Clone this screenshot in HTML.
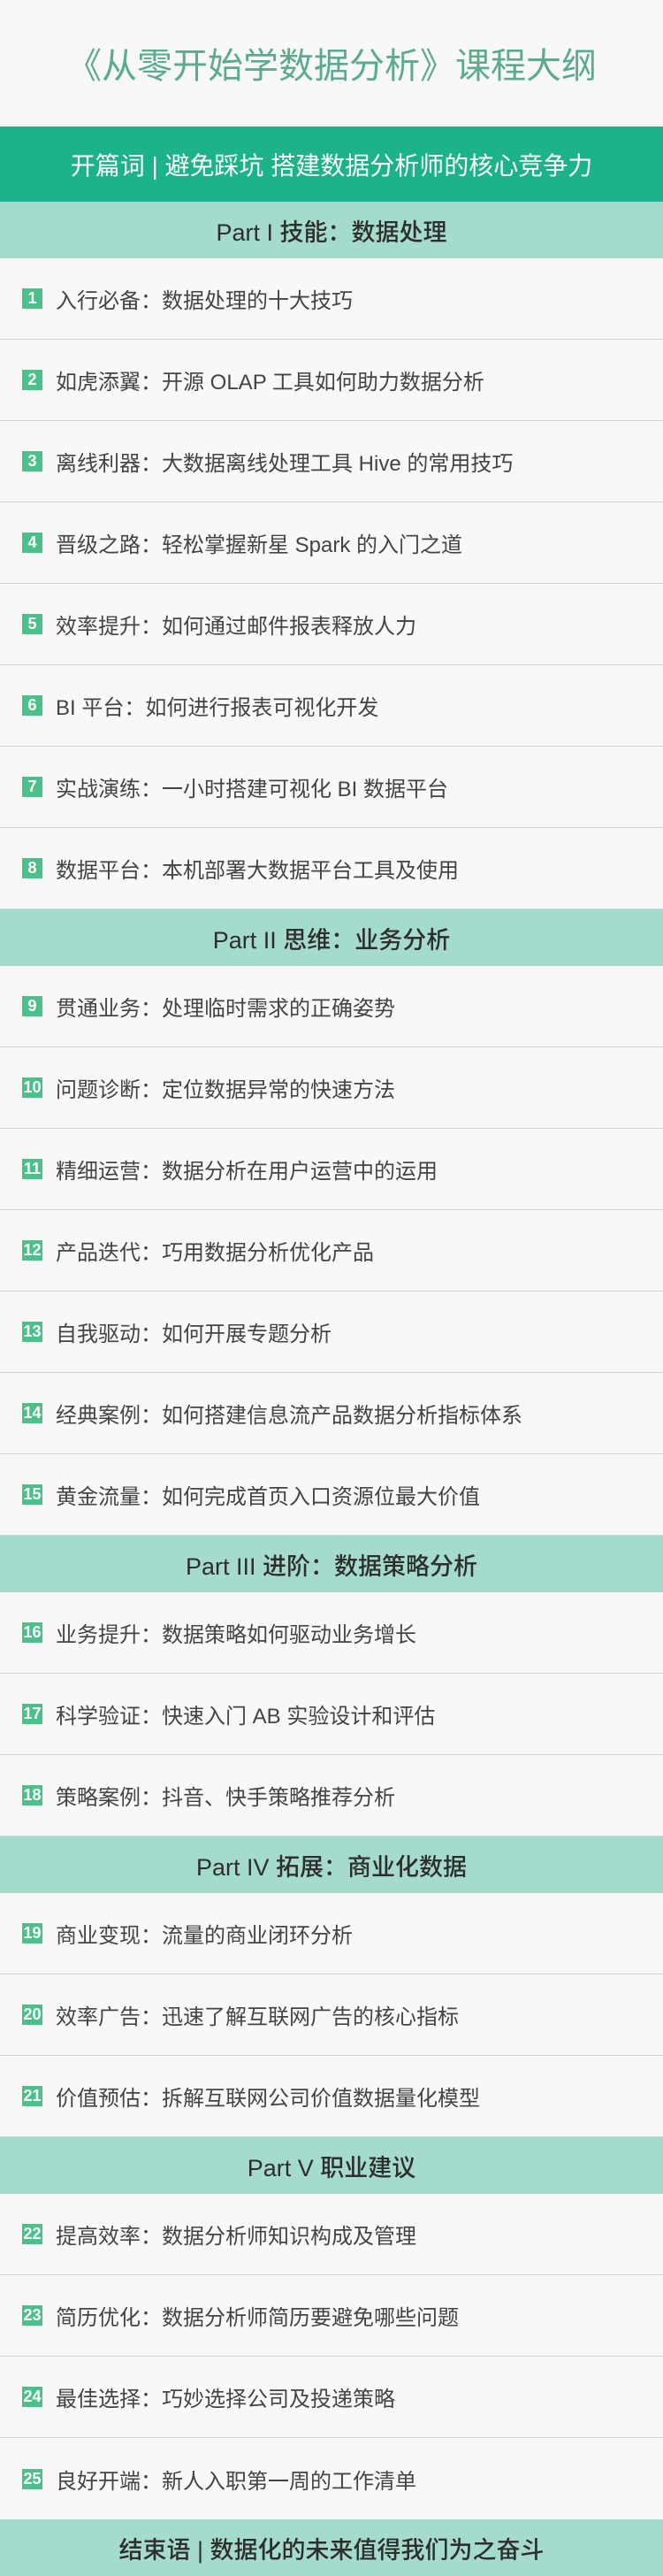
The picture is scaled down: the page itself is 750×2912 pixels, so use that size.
<!DOCTYPE html>
<html><head><meta charset="utf-8"><style>
*{margin:0;padding:0;box-sizing:border-box}
body{width:750px;height:2912px;background:#f8f8f8;font-family:"Liberation Sans","Noto Sans CJK SC",sans-serif;overflow:hidden}
.title{height:143px;display:flex;align-items:center;justify-content:center;color:#5cab8c;font-size:40px;padding-bottom:2px}
.open{height:85px;background:#1db38a;color:#fff;font-size:28px;display:flex;align-items:center;justify-content:center}
.part{height:64px;background:#a5dbcc;color:#2e2e2e;font-size:27px;font-weight:500;display:flex;align-items:center;justify-content:center}
.item{height:92px;border-bottom:1px solid #d2d2da;display:flex;align-items:center;padding-left:25px;font-size:24px;color:#444}
.b{width:23px;height:23px;background:#4cc08a;color:#fff;font-family:"Liberation Sans Narrow","Liberation Sans",sans-serif;font-size:18px;font-weight:bold;display:flex;align-items:center;justify-content:center;margin-right:15px;flex:none}
.item.last{border-bottom:none}
</style></head><body>
<div class="title">《从零开始学数据分析》课程大纲</div>
<div class="open">开篇词 | 避免踩坑 搭建数据分析师的核心竞争力</div>
<div class="part">Part I 技能：数据处理</div>
<div class="item"><span class="b">1</span>入行必备：数据处理的十大技巧</div>
<div class="item"><span class="b">2</span>如虎添翼：开源 OLAP 工具如何助力数据分析</div>
<div class="item"><span class="b">3</span>离线利器：大数据离线处理工具 Hive 的常用技巧</div>
<div class="item"><span class="b">4</span>晋级之路：轻松掌握新星 Spark 的入门之道</div>
<div class="item"><span class="b">5</span>效率提升：如何通过邮件报表释放人力</div>
<div class="item"><span class="b">6</span>BI 平台：如何进行报表可视化开发</div>
<div class="item"><span class="b">7</span>实战演练：一小时搭建可视化 BI 数据平台</div>
<div class="item"><span class="b">8</span>数据平台：本机部署大数据平台工具及使用</div>
<div class="part">Part II 思维：业务分析</div>
<div class="item"><span class="b">9</span>贯通业务：处理临时需求的正确姿势</div>
<div class="item"><span class="b">10</span>问题诊断：定位数据异常的快速方法</div>
<div class="item"><span class="b">11</span>精细运营：数据分析在用户运营中的运用</div>
<div class="item"><span class="b">12</span>产品迭代：巧用数据分析优化产品</div>
<div class="item"><span class="b">13</span>自我驱动：如何开展专题分析</div>
<div class="item"><span class="b">14</span>经典案例：如何搭建信息流产品数据分析指标体系</div>
<div class="item"><span class="b">15</span>黄金流量：如何完成首页入口资源位最大价值</div>
<div class="part">Part III 进阶：数据策略分析</div>
<div class="item"><span class="b">16</span>业务提升：数据策略如何驱动业务增长</div>
<div class="item"><span class="b">17</span>科学验证：快速入门 AB 实验设计和评估</div>
<div class="item"><span class="b">18</span>策略案例：抖音、快手策略推荐分析</div>
<div class="part">Part IV 拓展：商业化数据</div>
<div class="item"><span class="b">19</span>商业变现：流量的商业闭环分析</div>
<div class="item"><span class="b">20</span>效率广告：迅速了解互联网广告的核心指标</div>
<div class="item"><span class="b">21</span>价值预估：拆解互联网公司价值数据量化模型</div>
<div class="part">Part V 职业建议</div>
<div class="item"><span class="b">22</span>提高效率：数据分析师知识构成及管理</div>
<div class="item"><span class="b">23</span>简历优化：数据分析师简历要避免哪些问题</div>
<div class="item"><span class="b">24</span>最佳选择：巧妙选择公司及投递策略</div>
<div class="item last"><span class="b">25</span>良好开端：新人入职第一周的工作清单</div>
<div class="part">结束语 | 数据化的未来值得我们为之奋斗</div>
</body></html>
